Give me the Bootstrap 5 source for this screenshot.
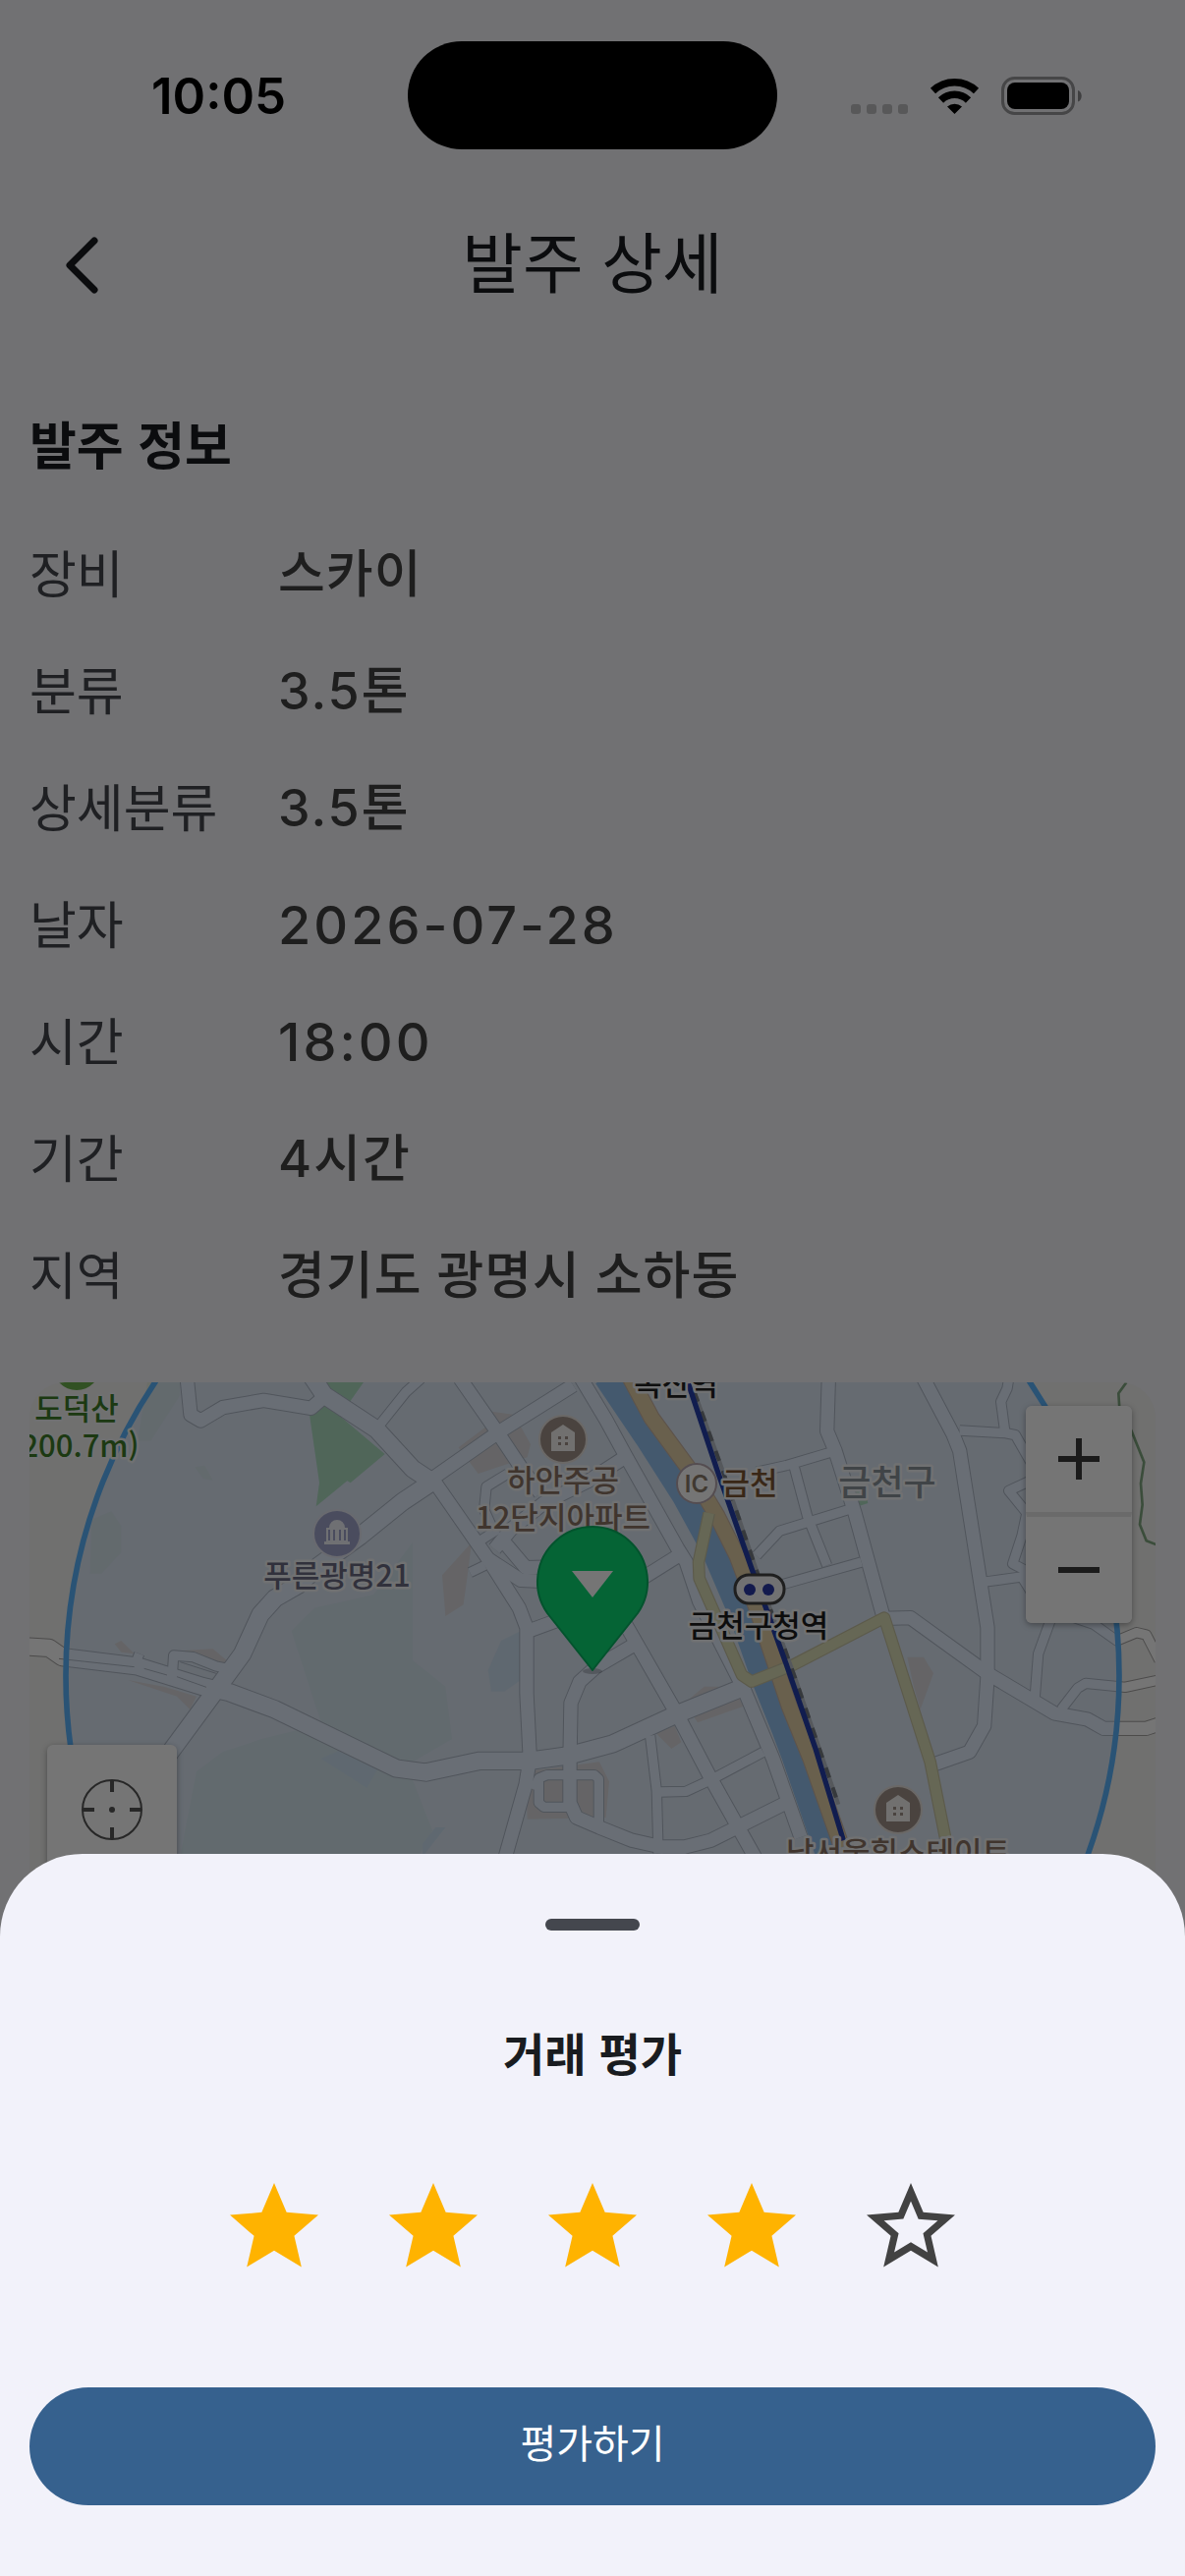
<!DOCTYPE html>
<html lang="ko">
<head>
<meta charset="utf-8">
<meta name="viewport" content="width=device-width, initial-scale=1">
<title>발주 상세</title>
<link href="https://cdn.jsdelivr.net/npm/bootstrap@5.3.0/dist/css/bootstrap.min.css" rel="stylesheet">
<style>
  body { background: #f7f7fb; color: #191c20; font-family: Inter, "Noto Sans CJK KR", sans-serif; overflow: hidden; }
  .kr { font-family: "Noto Sans CJK KR", sans-serif; }
  .status-bar { height: 192px; padding: 4px 104px 0 154px; position: relative; }
  .clock { font-size: 51px; font-weight: 600; line-height: 60px; color: #000; }
  .island { position: absolute; left: 50%; top: 42px; width: 376px; height: 110px; margin-left: -188px; border-radius: 55px; background: #000; }
  .app-bar { height: 156px; padding: 0 43px; }
  .app-bar h1 { font-size: 67px; font-weight: 400; line-height: 96px; padding-bottom: 12px; }
  .app-bar .btn, .app-bar .spacer { width: 84px; height: 84px; }
  .order-info { padding: 70px 30px 0; }
  .order-info h2 { font-size: 52px; font-weight: 700; line-height: 66px; margin-bottom: 65px; }
  .order-info dl { display: grid; row-gap: 48px; }
  .info-row { line-height: 71px; }
  .info-row dt { width: 253px; font-size: 52px; font-weight: 400; color: #44474e; line-height: 66px; }
  .info-row dd { font-size: 52px; font-weight: 500; color: #424242; line-height: 71px; letter-spacing: 2px; }
  .info-row dd.words { letter-spacing: 1px; }
  .info-row dd.digits { font-size: 54px; letter-spacing: 3px; }
  .map-box { height: 540px; margin-top: 73px; border-radius: 36px; background: #f3f3f1; }
  .map-box > svg { width: 100%; height: 540px; }
  .zoom-ctl { position: absolute; top: 24px; right: 24px; width: 108px; border-radius: 6px; overflow: hidden; box-shadow: 0 2px 6px rgba(0,0,0,.35); }
  .zoom-ctl .btn { height: 108px; background: #fff; }
  .zoom-ctl .btn + .btn { border-top: 5px solid #e6e6e6; height: 113px; }
  .locate-ctl { position: absolute; left: 18px; top: 369px; width: 132px; height: 132px; background: #fff; border-radius: 6px; box-shadow: 0 2px 6px rgba(0,0,0,.35); }
  .shade { position: fixed; inset: 0; background: rgba(0,0,0,.54); }
  .sheet { background: #f2f2fa; border-radius: 84px 84px 0 0; padding: 66px 30px 72px; }
  .grabber { width: 96px; height: 12px; border-radius: 6px; background: #44474e; }
  .sheet h2 { font-size: 46px; font-weight: 600; line-height: 64px; margin: 91px 0 75px; }
  .stars { gap: 18px; margin-bottom: 91px; }
  .stars .btn { width: 144px; height: 144px; }
  .star-on { color: #ffb300; }
  .star-off { color: #424242; }
  .rate-btn { height: 120px; background: #36618e; color: #fff; font-size: 40px; line-height: 60px; padding-bottom: 16px; }
  .lbl text { text-anchor: middle; font: 500 31px "Noto Sans CJK KR", sans-serif; paint-order: stroke; stroke: #f4f6f8; stroke-width: 5px; stroke-linejoin: round; }
</style>
</head>
<body>
<div>
  <header>
    <div class="status-bar d-flex justify-content-between align-items-center">
      <span class="clock">10:05</span>
      <span class="island"></span>
      <svg class="mt-1" width="236" height="44" viewBox="0 0 236 44" aria-hidden="true">
        <g fill="#bfc0c3"><rect x="0" y="28" width="10" height="10" rx="3"/><rect x="16" y="28" width="10" height="10" rx="3"/><rect x="32" y="28" width="10" height="10" rx="3"/><rect x="48" y="28" width="10" height="10" rx="3"/></g>
        <g fill="none" stroke="#000" stroke-width="7.5"><path d="M83.500 14.500a32 32 0 0 1 44 0"/><path d="M91.500 24a20 20 0 0 1 28 0"/></g>
        <path d="M98 30.500a11.500 11.500 0 0 1 15 0L105.500 38z"/>
        <rect x="154.500" y="1.500" width="72" height="36" rx="12" fill="none" stroke="#98989b" stroke-width="3"/>
        <rect x="159" y="6" width="63" height="27" rx="8"/>
        <path d="M231 14c5 1.500 5 10 0 11.500z" fill="#8a8a8d"/>
      </svg>
    </div>
    <div class="app-bar d-flex justify-content-between align-items-center">
      <button class="btn p-0 border-0" type="button" aria-label="뒤로">
        <svg width="84" height="84" viewBox="0 0 84 84" fill="none" stroke="#191c20" stroke-width="7" stroke-linecap="round" stroke-linejoin="round"><path d="M53 17 28 42l25 25"/></svg>
      </button>
      <h1 class="kr m-0">발주 상세</h1>
      <span class="spacer"></span>
    </div>
  </header>

  <main class="order-info">
    <h2 class="kr">발주 정보</h2>
    <dl class="m-0">
      <div class="info-row d-flex"><dt class="kr">장비</dt><dd class="words m-0">스카이</dd></div>
      <div class="info-row d-flex"><dt class="kr">분류</dt><dd class="m-0">3.5톤</dd></div>
      <div class="info-row d-flex"><dt class="kr">상세분류</dt><dd class="m-0">3.5톤</dd></div>
      <div class="info-row d-flex"><dt class="kr">날자</dt><dd class="digits m-0">2026-07-28</dd></div>
      <div class="info-row d-flex"><dt class="kr">시간</dt><dd class="digits m-0">18:00</dd></div>
      <div class="info-row d-flex"><dt class="kr">기간</dt><dd class="m-0">4시간</dd></div>
      <div class="info-row d-flex"><dt class="kr">지역</dt><dd class="words m-0">경기도 광명시 소하동</dd></div>
    </dl>

    <section class="map-box position-relative overflow-hidden" aria-label="지도">
      <svg class="d-block" viewBox="10 17 1146 540" preserveAspectRatio="xMidYMin slice">
        <defs>
          <g id="roads-wide" fill="none" stroke-linejoin="round">
            <path d="M890 30 930 90 1090 195 1200 315 1260 355"/>
            <path d="M1260 355 1170 415 1040 520 915 610 850 670 780 710 735 760 680 880 600 990 460 1180 420 1240"/>
            <path d="M20 858 90 862 130 890 360 918 560 980 640 998 780 1050 1150 1230 1240 1242 1405 1207 1555 1207 1680 1190 1810 1155 2005 1065 2215 980"/>
          </g>
          <g id="roads-mid" fill="none" stroke-linejoin="round">
            <path d="M510 30 522 150 553 168 620 128 745 106 890 130 930 95"/>
            <path d="M1345 40 1460 205 1530 310 1590 390"/>
            <path d="M1690 60 1460 205 1260 345 1100 470"/>
            <path d="M1260 345 1430 590 1525 740 1548 800 1548 1000 1558 1200 1545 1280 1480 1510"/>
            <path d="M1715 40 1790 165 1850 275 2010 560 2035 600 2075 720 2210 985 2300 1200 2385 1440"/>
            <path d="M1840 285 1740 350 1600 420 1500 500 1450 560"/>
            <path d="M1430 590 1530 655 1640 660"/><path d="M1480 540 1545 617 1640 615"/>
            <path d="M1560 808 1650 775 1760 740"/><path d="M1900 650 2015 578"/>
            <path d="M1850 790 2005 1060 2110 1260 2250 1510"/>
            <path d="M1880 850 1760 920 1710 965 1683 1030 1680 1200 1680 1335 1700 1380 1770 1410 1870 1450 1960 1470 2030 1470 2110 1450 2340 1335"/>
          </g>
          <g id="roads-slim" fill="none" stroke-linejoin="round">
            <path d="M1225 40 1180 80 1088 195"/>
            <path d="M350 920 365 880M465 960 470 885 530 890 600 918 650 928"/>
            <path d="M1925 1130 1945 1300 1950 1490M1955 1302 2035 1300 2110 1265 2270 1180"/>
            <path d="M1570 1295 1585 1260 1610 1250 1755 1250 1768 1262 1768 1400M1585 1270 1585 1335 1600 1348 1680 1348"/>
            <path d="M1390 545 1460 500M1375 632 1420 610M1490 330 1425 370 1418 440 1450 510"/>
            <path d="M2870 198 3010 206 3040 212 3090 300"/><path d="M3020 40 3015 70 2996 110 3008 200"/>
            <path d="M2250 325 2340 305 2475 265M2250 580 2320 505 2530 440M2250 690 2340 665 2570 600M2365 310 2405 460 2465 610"/>
            <path d="M3180 1050 3230 985 3255 970 3375 982 3480 960"/><path d="M3100 1010 3110 880 3150 770"/>
            <path d="M2950 660 3060 645 3100 710M3100 345 3020 382 3075 450 3060 520 3032 605 3080 630"/>
            <path d="M3220 770 3280 790 3350 840 3410 815 3440 822 3480 900"/>
          </g>
          <g id="roads-east" fill="none" stroke-linejoin="round">
            <path d="M2470 40 2465 200 2490 260 2550 450 2635 760"/>
            <path d="M2760 40 2850 210 2870 260 2955 800 2955 950 2945 1100 2900 1180 2780 1222"/>
            <path d="M2640 772 2720 770 2955 940 3160 1062 3260 1080 3310 1108 3440 1108 3480 1095"/>
          </g>
          <g id="house"><circle r="24" fill="#a1928a" stroke="#e8e2de" stroke-width="2"/><path d="M-12 12V-7L0-15 12-7V12z" fill="#f6f3f1"/><path d="M-5-3h3v3h-3zM2-3h3v3H2zM-5 3h3v3h-3zM2 3h3v3H2z" fill="#a1928a"/></g>
        </defs>

        <g transform="scale(.33333)">
          <!-- land cover -->
          <g fill="#e9efe2">
            <path d="M220 470 280 445 310 490V570L250 635H215zM390 51H490V90L400 230H360zM535 310l30-5 25 45-30-5z"/>
          </g>
          <path fill="#e5f1e4" d="M830 810 900 740 1080 700 1200 540V900L1300 980 1320 1140 1200 1210 1150 1230 1010 1160 930 1120zM490 1500 540 1240 620 1180 740 1140 900 1100 1190 1240 1260 1420 1200 1530H490z"/>
          <path fill="#dce9ec" d="M1430 930 1470 840 1530 810V960L1480 995H1440zM1230 1460 1270 1410H1300L1230 1500zM920 1200 1010 1160 1100 1220 1060 1290z"/>
          <path fill="#a3e19c" d="M885 150 935 118 1115 270 1010 358 1000 352 905 430 915 358zM925 51H1050L1005 115zM2540 350 2570 340 2590 420 2560 430z"/>
          <path fill="#f0dcc8" d="M1340 250 1420 190 1440 140 1510 150 1560 240 1550 280 1400 330zM1290 640 1380 540 1370 620 1355 730 1300 765zM290 850l20-10 40 40-40-5zM500 870l90-5 60 50-80-10zM330 960l110 20 100 30-20 40-40-40zM2030 1030 2090 980 2180 980 2210 1040 2070 1090zM1940 1120 2000 1100 2020 1150 1990 1170zM1545 1240 1770 1210 1800 1270 1790 1380 1550 1385zM2710 890 2760 890 2790 940 2750 1050 2730 980z"/>

          <!-- road network -->
          <g stroke="#a5a3a2"><use href="#roads-slim" stroke-width="34"/><use href="#roads-mid" stroke-width="46"/><use href="#roads-east" stroke-width="46"/><use href="#roads-wide" stroke-width="58"/></g>
          <g stroke="#fff"><use href="#roads-slim" stroke-width="28"/><use href="#roads-mid" stroke-width="40"/><use href="#roads-east" stroke-width="40"/><use href="#roads-wide" stroke-width="52"/></g>
          <path d="M120 895 350 920M380 925 450 945M480 950 570 982M490 905 600 940" fill="none" stroke="#a5a3a2" stroke-width="3"/>

          <g fill="none" stroke-linejoin="round">
            <path stroke="#7bb5e4" stroke-width="88" d="M1795 30 1920 215 2035 395 2120 550 2210 760 2280 960 2340 1110 2370 1190 2470 1480"/>
            <path stroke="#d49e68" stroke-width="52" d="M1860 30 1930 160 2040 310 2130 460 2190 580 2250 740 2300 890 2350 1040 2415 1200 2510 1470"/>
            <path stroke="#ffce71" stroke-width="45" d="M1860 30 1930 160 2040 310 2130 460 2190 580 2250 740 2300 890 2350 1040 2415 1200 2510 1470"/>
            <path stroke="#cfb768" stroke-width="38" d="M2105 450 2073 600 2075 650 2205 945 2235 965 2360 915 2640 770 2780 1210 2830 1460"/>
            <path stroke="#f3e58c" stroke-width="31" d="M2105 450 2073 600 2075 650 2205 945 2235 965 2360 915 2640 770 2780 1210 2830 1460"/>
            <path stroke="#80a880" stroke-width="8" d="M3380 50 3355 85 3358 130 3395 200 3433 295 3423 360 3428 425 3420 485 3440 535 3480 550"/>
          </g>

          <circle cx="1749" cy="947" r="1608" fill="#bedaff" fill-opacity=".4" stroke="#5cb6ff" stroke-width="17"/>

          <g fill="none">
            <path stroke="#b9bfc8" stroke-width="12" d="M2060 80 2150 330 2255 640 2370 960 2500 1340"/>
            <path stroke="#777c84" stroke-width="12" stroke-dasharray="32 32" d="M2060 80 2150 330 2255 640 2370 960 2500 1340"/>
            <path stroke="#253fac" stroke-width="16" d="M2040 50 2130 320 2235 620 2340 910 2430 1170 2515 1450"/>
          </g>
        </g>

        <!-- places -->
        <g class="lbl">
          <circle cx="58" cy="1" r="24" fill="#6cb04c"/>
          <g fill="#3d7d28"><text x="58" y="55">도덕산</text><text x="56" y="93">(200.7m)</text></g>
          <g transform="translate(323 171)"><circle r="24" fill="#a1a7ce" stroke="#e4e6f2" stroke-width="2"/><path d="M-13 11H13V8H11V-6H8a8 8 0 0 0-16 0h-3V8h-2z" fill="#f2f3fa"/><path d="M-8-4V7M-3-4V7M3-4V7M8-4V7" stroke="#a1a7ce" stroke-width="2"/></g>
          <text x="323" y="225" fill="#6c6c84">푸른광명21</text>
          <use href="#house" x="553" y="75"/>
          <g fill="#8d7565"><text x="553" y="128">하안주공</text><text x="553" y="166">12단지아파트</text></g>
          <circle cx="689" cy="120" r="20" fill="#fff" stroke="#b8a8b0" stroke-width="2"/>
          <text x="689" y="129" fill="#8d7d6c" style="font:600 24px Inter,sans-serif;stroke:none">IC</text>
          <text x="743" y="131" fill="#7d5533">금천</text>
          <text x="668" y="30" fill="#222">독산역</text>
          <text x="883" y="132" fill="#8b949c" style="font-size:36px">금천구</text>
          <rect x="728" y="213" width="50" height="29" rx="14" fill="#f6f6f8" stroke="#444" stroke-width="3"/><circle cx="743" cy="228" r="6" fill="#2b3aa8"/><circle cx="762" cy="228" r="6" fill="#2b3aa8"/>
          <text x="752" y="276" fill="#1e1e1e">금천구청역</text>
          <use href="#house" x="894" y="452"/>
          <text x="894" y="507" fill="#8d7565">남서울힐스테이트</text>
        </g>

        <!-- work site -->
        <ellipse cx="583" cy="311" rx="10" ry="3" opacity=".2"/>
        <path d="M583 310 537 252a56 56 0 1 1 92 0z" fill="#0bd975" stroke="#08b562" stroke-width="2" stroke-linejoin="round"/>
        <path d="M562 209h42l-21 27z" fill="#fff"/>
      </svg>
      <div class="zoom-ctl d-flex flex-column">
        <button class="btn p-0 border-0 rounded-0" type="button" aria-label="확대"><svg width="42" height="42" viewBox="0 0 42 42" stroke="#3c3c3c" stroke-width="6"><path d="M0 21H42M21 0V42"/></svg></button>
        <button class="btn p-0 rounded-0" type="button" aria-label="축소"><svg width="42" height="42" viewBox="0 0 42 42" stroke="#3c3c3c" stroke-width="6"><path d="M0 21H42"/></svg></button>
      </div>
      <button class="locate-ctl btn p-0 border-0" type="button" aria-label="현재 위치"><svg width="62" height="62" viewBox="0 0 62 62" fill="none" stroke="#555"><circle cx="31" cy="31" r="30" stroke-width="2"/><path d="M31 1V13M31 49V61M1 31H13M49 31H61" stroke-width="4"/><circle cx="31" cy="31" r="3" fill="#555" stroke="none"/></svg></button>
    </section>
  </main>
</div>

<div class="shade"></div>

<section class="sheet fixed-bottom d-flex flex-column align-items-center" role="dialog" aria-labelledby="rate-title">
  <span class="grabber"></span>
  <h2 class="kr" id="rate-title">거래 평가</h2>
  <div class="stars d-flex justify-content-center">
    <button class="btn p-0 border-0 star-on" type="button" aria-label="1점"><svg width="108" height="108" viewBox="0 0 24 24" fill="currentColor"><path d="M12 17.270 18.180 21l-1.640-7.030L22 9.240l-7.190-.61L12 2 9.190 8.630 2 9.240l5.460 4.730L5.820 21z"/></svg></button>
    <button class="btn p-0 border-0 star-on" type="button" aria-label="2점"><svg width="108" height="108" viewBox="0 0 24 24" fill="currentColor"><path d="M12 17.270 18.180 21l-1.640-7.030L22 9.240l-7.190-.61L12 2 9.190 8.630 2 9.240l5.460 4.730L5.820 21z"/></svg></button>
    <button class="btn p-0 border-0 star-on" type="button" aria-label="3점"><svg width="108" height="108" viewBox="0 0 24 24" fill="currentColor"><path d="M12 17.270 18.180 21l-1.640-7.030L22 9.240l-7.190-.61L12 2 9.190 8.630 2 9.240l5.460 4.730L5.820 21z"/></svg></button>
    <button class="btn p-0 border-0 star-on" type="button" aria-label="4점"><svg width="108" height="108" viewBox="0 0 24 24" fill="currentColor"><path d="M12 17.270 18.180 21l-1.640-7.030L22 9.240l-7.190-.61L12 2 9.190 8.630 2 9.240l5.460 4.730L5.820 21z"/></svg></button>
    <button class="btn p-0 border-0 star-off" type="button" aria-label="5점"><svg width="108" height="108" viewBox="0 0 24 24" fill="currentColor"><path d="m22 9.240-7.190-.62L12 2 9.190 8.630 2 9.240l5.460 4.730L5.820 21 12 17.270 18.180 21l-1.630-7.030L22 9.240zM12 15.400l-3.760 2.270 1-4.280-3.320-2.880 4.380-.38L12 6.100l1.710 4.040 4.380.38-3.320 2.880 1 4.280L12 15.400z"/></svg></button>
  </div>
  <button class="rate-btn kr btn w-100 rounded-pill border-0" type="button">평가하기</button>
</section>
<script src="https://cdn.jsdelivr.net/npm/bootstrap@5.3.0/dist/js/bootstrap.bundle.min.js"></script>
</body>
</html>
